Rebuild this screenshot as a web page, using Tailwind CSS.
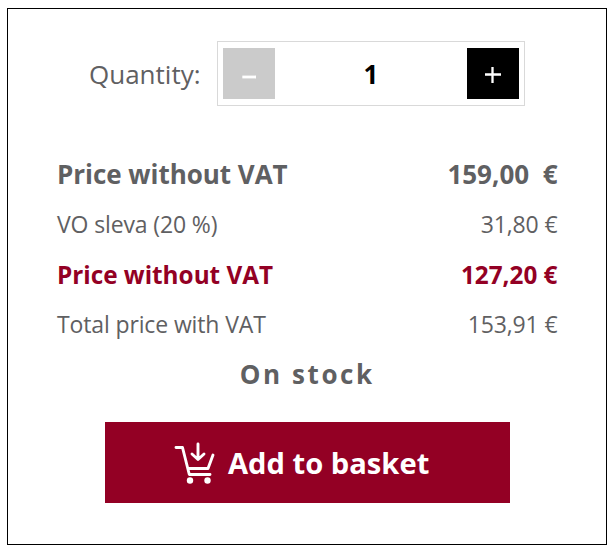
<!DOCTYPE html>
<html lang="en">
<head>
<meta charset="utf-8">
<title>Add to basket</title>
<script src="https://cdn.jsdelivr.net/npm/@tailwindcss/browser@4"></script>
</head>
<body class="bg-white font-['Open_Sans',sans-serif] text-[#5f6062]">
<main class="ml-[7px] mt-2 w-[600px] h-[537px] border border-black flex flex-col whitespace-nowrap">
  <div class="mt-8 ml-[81px] flex items-center h-[65px]">
    <span class="w-32 text-[26px] leading-[34px]">Quantity:</span>
    <div class="w-[308px] h-[65px] border border-[#d9d9d9] flex items-center justify-between px-[5px]">
      <button class="w-[52px] h-[51px] bg-[#cbcbcb] flex items-center justify-center" aria-label="Decrease">
        <svg class="w-4 h-4 mt-[7px]" viewBox="0 0 16 16"><path d="M1.3 8H15" stroke="#fff" stroke-width="2.8"/></svg>
      </button>
      <span class="text-[26px] font-bold leading-[34px] text-black pt-px">1</span>
      <button class="w-[52px] h-[51px] bg-black flex items-center justify-center" aria-label="Increase">
        <svg class="w-4 h-4 mt-[3px]" viewBox="0 0 16 16"><path d="M0 7.5H16M7.5 0V16" stroke="#fff" stroke-width="2.3"/></svg>
      </button>
    </div>
  </div>
  <div class="mt-[43px] pl-[49px] pr-[48.5px] flex flex-col">
    <div class="h-[50px] flex items-center justify-between text-[26px] font-bold"><span class="tracking-[-0.04px]">Price without VAT</span><span>159,00&nbsp; €</span></div>
    <div class="h-[50px] flex items-center justify-between text-[23px]"><span class="tracking-[-0.13px]">VO sleva (20 %)</span><span class="tracking-[-0.13px]">31,80 €</span></div>
    <div class="h-[50px] pt-0.5 flex items-center justify-between text-[24.3px] font-bold text-[#930024]"><span>Price without VAT</span><span>127,20 €</span></div>
    <div class="h-[50px] flex items-center justify-between text-[23px]"><span class="tracking-[-0.13px]">Total price with VAT</span><span class="tracking-[-0.13px]">153,91 €</span></div>
    <div class="h-[50px] flex items-center justify-center text-[26px] font-bold tracking-[2.6px]"><span>On stock</span></div>
  </div>
  <button class="mt-[23px] ml-[97px] w-[405px] h-[81px] shrink-0 bg-[#930024] text-white flex items-center pl-[69px] text-[29.15px] font-bold">
    <svg class="w-[42px] h-[44px] mr-3" viewBox="0 0 42 44" fill="none" stroke="#fff" stroke-width="2.9" stroke-linecap="round" stroke-linejoin="round">
      <path d="M2 6.5H8.5L15.3 33.5H36M13.8 27.5H34L39 14M24 3V18.5M18 13L24 18.5L30 13"/>
      <g fill="#fff" stroke="none"><circle cx="16" cy="39.5" r="3.2"/><circle cx="33.5" cy="39.5" r="3.2"/></g>
    </svg>
    <span class="pt-0.5">Add to basket</span>
  </button>
</main>
</body>
</html>
